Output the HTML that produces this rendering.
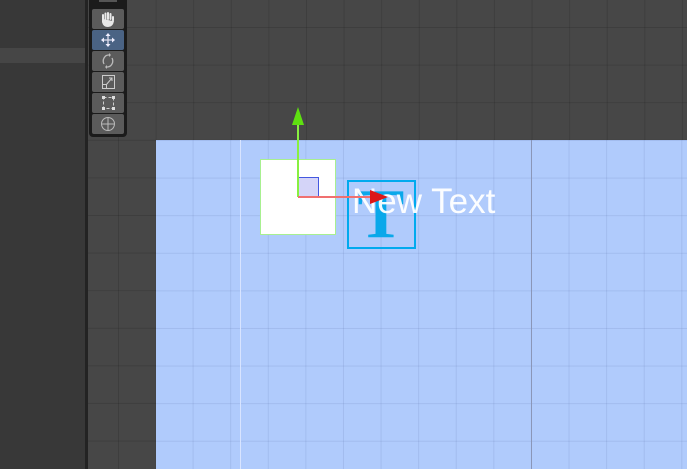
<!DOCTYPE html>
<html><head><meta charset="utf-8"><style>
*{margin:0;padding:0;box-sizing:border-box}
body{width:687px;height:469px;overflow:hidden;background:#474747;position:relative;font-family:"Liberation Sans",sans-serif}
.abs{position:absolute}
.grid{background-image:linear-gradient(to right,rgba(0,0,0,0.12) 1px,transparent 1px),linear-gradient(to bottom,rgba(0,0,0,0.12) 1px,transparent 1px);background-size:37.6px 37.6px}
.btn{position:absolute;left:92px;width:32px;height:20px;background:#5b5b5b;border-radius:2px}
</style></head><body>
<div class="abs grid" style="left:88px;top:0;width:599px;height:469px;background-color:#474747;background-position:30px 27px"></div>
<div class="abs" style="left:0;top:0;width:86px;height:469px;background:#383838"></div>
<div class="abs" style="left:0;top:48px;width:86px;height:15px;background:#464646"></div>
<div class="abs" style="left:85px;top:0;width:3px;height:469px;background:#232323"></div>
<div class="abs grid" style="left:156px;top:140px;width:531px;height:329px;background-color:#b0cbfc;background-position:-1px 0;background-image:linear-gradient(to right,rgba(60,80,140,0.12) 1px,transparent 1px),linear-gradient(to bottom,rgba(60,80,140,0.12) 1px,transparent 1px)"></div>
<div class="abs" style="left:240px;top:140px;width:1px;height:329px;background:#d8e4ff"></div>
<div class="abs" style="left:531px;top:140px;width:1px;height:329px;background:#8a96b8"></div>
<!-- toolbar -->
<div class="abs" style="left:89px;top:0;width:38px;height:137px;background:#1b1b1b;border-radius:0 0 4px 4px"></div>
<div class="abs" style="left:99px;top:0;width:18px;height:2px;background:#555"></div>
<div class="btn" style="top:9px"><svg width="32" height="20"><path d="M11 10 V6 M13.5 10 V4.5 M16 10 V4 M18.5 10 V5 M21 11 V8 M11 10 L11 13 Q12 17 16 17 Q20 17 21 12" stroke="#e8e8e8" stroke-width="2" fill="#e8e8e8" stroke-linecap="round"/></svg></div>
<div class="btn" style="top:30px;background:#4a6384"><svg width="32" height="20"><path d="M16 4 V16 M10 10 H22" stroke="#dde" stroke-width="1.3"/><path d="M16 3 l-2.5 3h5z M16 17 l-2.5-3h5z M9 10 l3-2.5v5z M23 10 l-3-2.5v5z" fill="#eef"/></svg></div>
<div class="btn" style="top:51px"><svg width="32" height="20"><path d="M12 13 A5.5 6 0 0 1 17 4 M20 7 A5.5 6 0 0 1 15 16" stroke="#bbb" stroke-width="1.3" fill="none"/><path d="M17 2 l2 2-2 2z M15 14 l-2 2 2 2z" fill="#bbb"/></svg></div>
<div class="btn" style="top:72px"><svg width="32" height="20"><rect x="10.5" y="3.5" width="12" height="13" stroke="#ccc" fill="none"/><rect x="10.5" y="12.5" width="4" height="4" stroke="#ccc" fill="none"/><path d="M14 13 L20 6 M17 6h3v3" stroke="#ccc" fill="none"/></svg></div>
<div class="btn" style="top:93px"><svg width="32" height="20"><rect x="11.5" y="4.5" width="10" height="11" stroke="#ccc" fill="none" stroke-dasharray="3 2"/><rect x="10" y="3" width="3" height="3" fill="#ddd"/><rect x="20" y="3" width="3" height="3" fill="#ddd"/><rect x="10" y="14" width="3" height="3" fill="#ddd"/><rect x="20" y="14" width="3" height="3" fill="#ddd"/></svg></div>
<div class="btn" style="top:114px"><svg width="32" height="20"><circle cx="16" cy="10" r="6.5" stroke="#bbb" fill="none"/><path d="M16 4 V16 M10 10 H22" stroke="#bbb"/></svg></div>
<!-- objects -->
<div class="abs" style="left:260px;top:159px;width:76px;height:76px;background:#fff;border:1px solid #a8f090"></div>
<div class="abs" style="left:347px;top:180px;width:69px;height:69px;border:2px solid #00aaee"></div>
<svg class="abs" style="left:0;top:0" width="687" height="469">
<text x="381" y="237" text-anchor="middle" font-family="Liberation Serif" font-weight="bold" font-size="70" fill="#0aa8ea">T</text>
<text x="352" y="213" font-family="Liberation Sans" font-size="35" fill="#fff" fill-opacity="0.95">New Text</text>
<rect x="298.5" y="177.5" width="20" height="20" fill="#d4d4f8" stroke="#4458e0"/>
<line x1="298" y1="197" x2="298" y2="122" stroke="#88f040" stroke-width="2"/>
<path d="M298 107 L292 125 L304 125 Z" fill="#5ee010"/>
<line x1="298" y1="197" x2="375" y2="197" stroke="#f07070" stroke-width="2"/>
<path d="M388 197 L370 190 L370 204 Z" fill="#dd1818"/>
</svg>
</body></html>
